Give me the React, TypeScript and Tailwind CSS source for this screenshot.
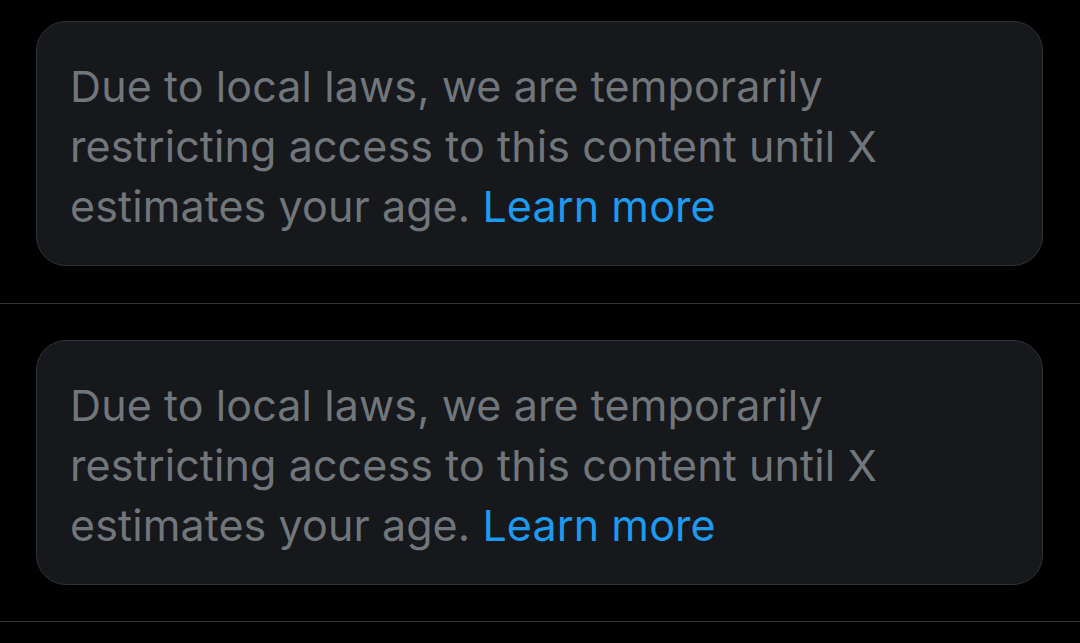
import React from 'react';

const items = [1, 2];

function Notice() {
  return (
    <div className="ml-[36px] mr-[37px] h-[245px] rounded-[30px] border border-[#2f3336] bg-[#16181c] px-[33px] pt-[34px]">
      <p
        className="text-[43px] leading-[60px] tracking-[0.1px] whitespace-nowrap text-[#71767b]"
        style={{ fontFamily: 'Inter, "Noto Sans", sans-serif' }}
      >
        Due to local laws, we are temporarily
        <br />
        restricting access to this content until X
        <br />
        estimates your age. <span className="text-[#1d9bf0]">Learn more</span>
      </p>
    </div>
  );
}

export default function App() {
  return (
    <div className="h-[643px] w-[1080px] overflow-hidden bg-black">
      {items.map((i) => (
        <div
          key={i}
          className={i === 1 ? 'border-b border-[#2f3336] pt-[21px] pb-[37px]' : 'border-b border-[#2f3336] pt-[36px] pb-[36px]'}
        >
          <Notice />
        </div>
      ))}
    </div>
  );
}
